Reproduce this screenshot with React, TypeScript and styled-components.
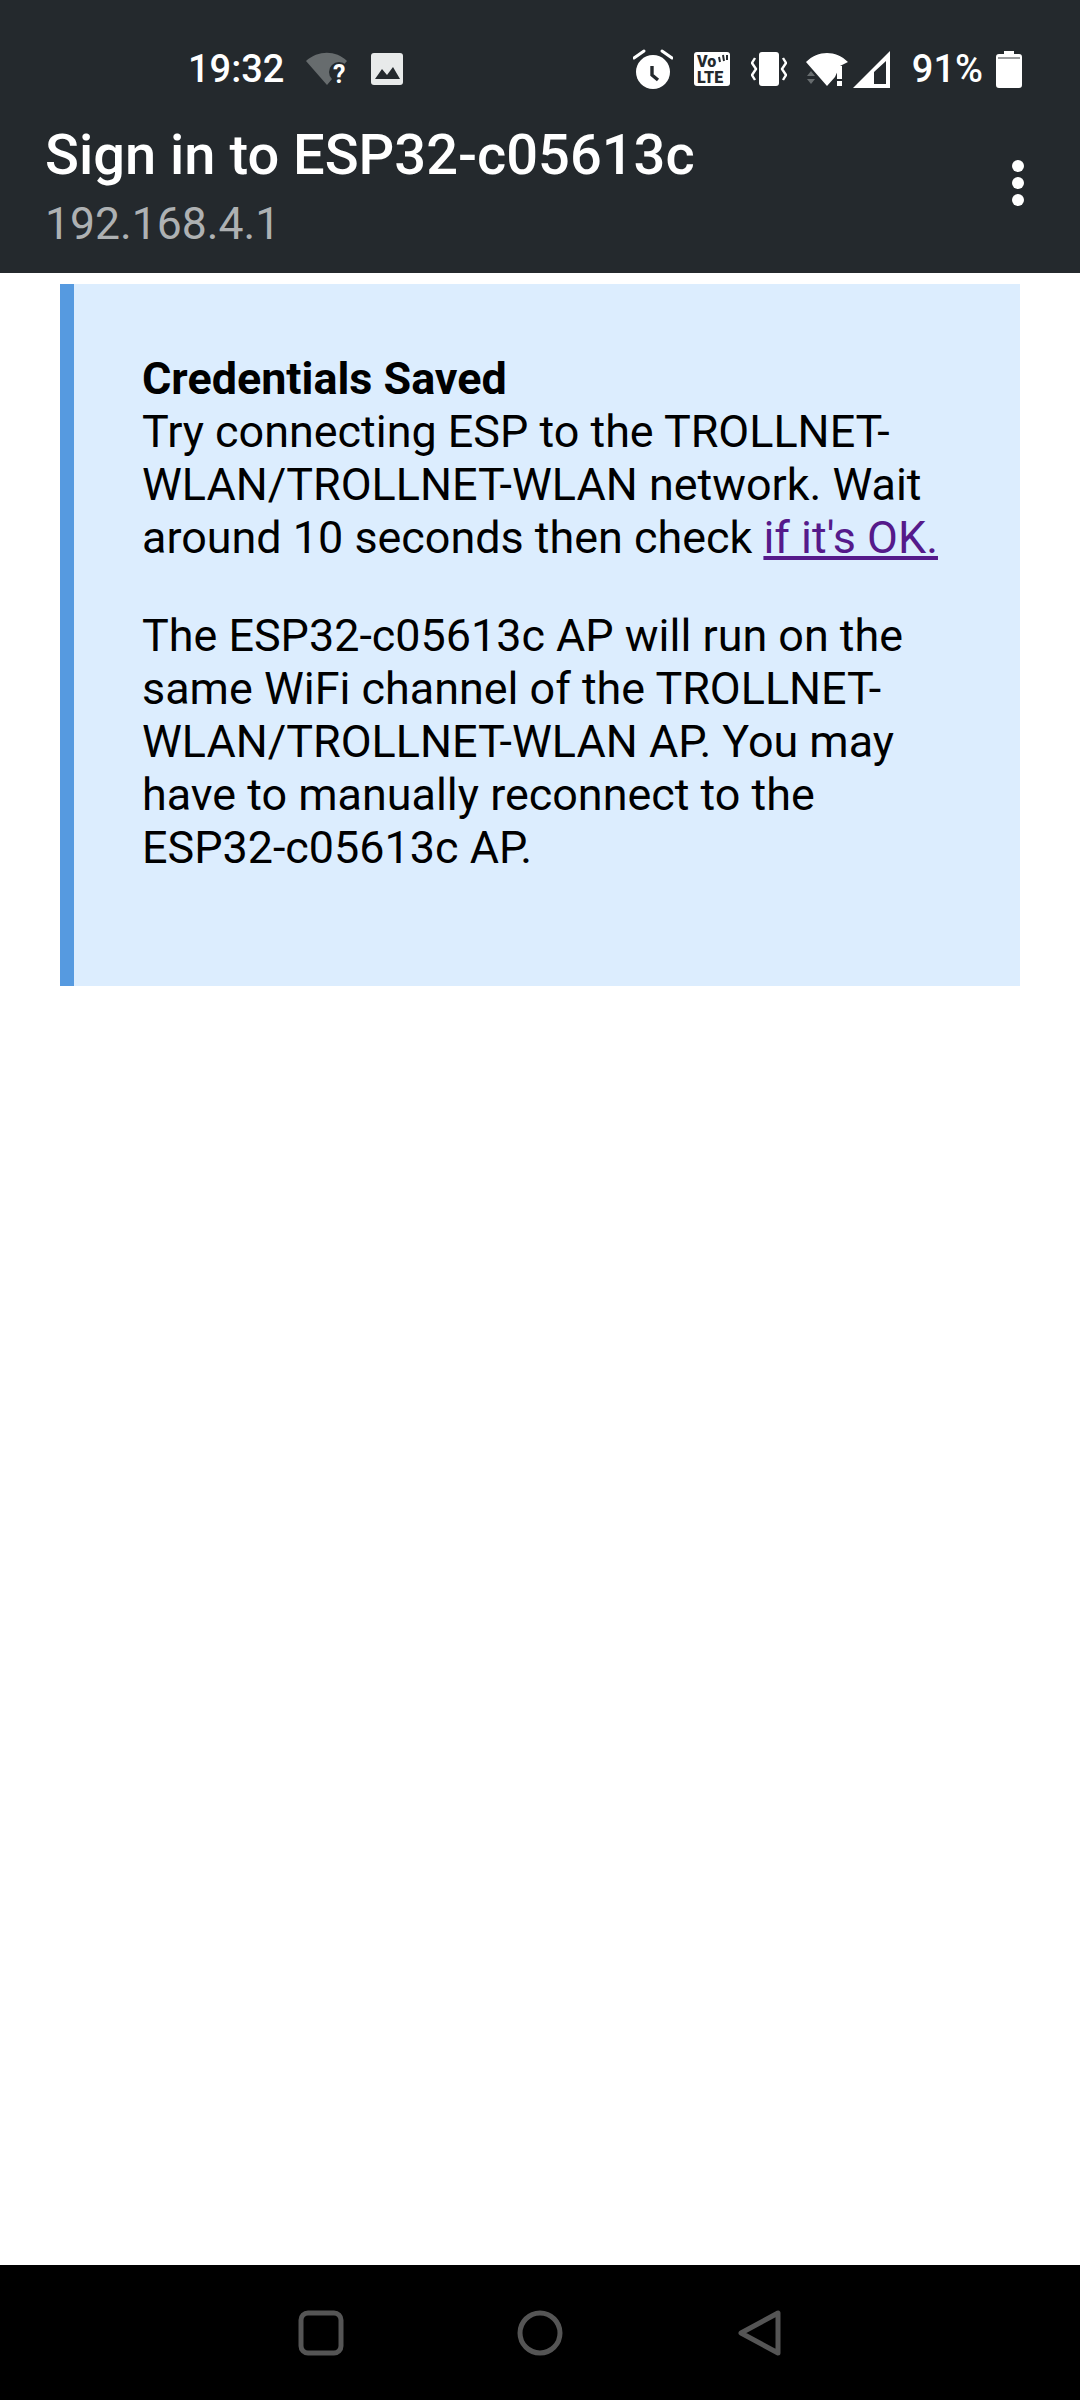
import styled, { createGlobalStyle } from 'styled-components';

const GlobalStyle = createGlobalStyle`
  html, body {
    margin: 0;
    padding: 0;
    background: #fff;
    font-family: Roboto, "Liberation Sans", sans-serif;
  }
`;

const Screen = styled.div`
  width: 1080px;
  height: 2400px;
  display: flex;
  flex-direction: column;
  overflow: hidden;
`;

const Header = styled.header`
  height: 273px;
  flex: none;
  background: #24292d;
  color: #fff;
  display: flex;
  flex-direction: column;
`;

const StatusBar = styled.div`
  height: 38px;
  padding: 50px 58px 0 188px;
  display: flex;
  align-items: center;
  justify-content: space-between;
`;

const StatusGroup = styled.div`
  display: flex;
  align-items: center;
`;

const StatusSlot = styled.span<{ $left: number }>`
  display: flex;
  align-items: center;
  margin-left: ${props => props.$left}px;
`;

const StatusText = styled.span`
  font-size: 38px;
  font-weight: 500;
  line-height: 40px;
  color: #fff;
  white-space: nowrap;
`;

const TitleRow = styled.div`
  flex: 1;
  display: flex;
  align-items: flex-start;
  justify-content: space-between;
  padding: 36px 56px 0 45px;
`;

const TitleBlock = styled.div`
  display: flex;
  flex-direction: column;
`;

const Title = styled.h1`
  margin: 0;
  font-size: 56px;
  line-height: 62px;
  font-weight: 500;
  color: #fff;
  white-space: nowrap;
`;

const Subtitle = styled.div`
  font-size: 44.5px;
  line-height: 50px;
  margin-top: 13px;
  color: #aeb1b3;
`;

const MenuDots = styled.div`
  display: flex;
  flex-direction: column;
  gap: 5px;
  margin-top: 36px;
`;

const Dot = styled.span`
  width: 12px;
  height: 12px;
  border-radius: 50%;
  background: #fff;
`;

const Content = styled.main`
  flex: 1;
  background: #fff;
  padding: 11px 60px 0;
`;

const Notice = styled.section`
  background: #dcedfe;
  border-left: 14px solid #569ae0;
  padding: 68px 70px 0 68px;
  height: 702px;
  box-sizing: border-box;
  color: #000;
  font-size: 44.9px;
  line-height: 53px;
`;

const NoticeTitle = styled.strong`
  display: block;
  font-weight: 700;
`;

const Paragraph = styled.p`
  margin: 0 0 45px;
`;

const NoticeLink = styled.a`
  color: #551a8b;
  text-decoration: underline;
`;

const NavBar = styled.nav`
  height: 135px;
  flex: none;
  background: #000;
  display: flex;
  justify-content: center;
  align-items: center;
`;

const NavCell = styled.div`
  width: 219px;
  display: flex;
  justify-content: center;
`;

export default function App() {
  return (
    <Screen>
      <GlobalStyle />
      <Header>
        <StatusBar>
          <StatusGroup>
            <StatusText>19:32</StatusText>
            <StatusSlot $left={22}>
              <svg width="42" height="36" viewBox="0 0 42 36">
                <path d="M21 34 L0 10 C12 -1 30 -1 41 10 L33 19 L26 28 Z" fill="#676c6e" />
                <circle cx="33" cy="21" r="10" fill="#24292d" />
                <text x="27" y="32" fontSize="25" fontWeight="700" fontFamily="Roboto, sans-serif" fill="#fff">?</text>
              </svg>
            </StatusSlot>
            <StatusSlot $left={23}>
              <svg width="32" height="32" viewBox="0 0 32 32">
                <rect width="32" height="32" rx="3" fill="#e8eaea" />
                <path d="M4 26 L11 16 L16 22 L22 14 L29 26 Z" fill="#24292d" />
              </svg>
            </StatusSlot>
          </StatusGroup>
          <StatusGroup>
            <svg width="40" height="40" viewBox="0 0 40 40">
              <circle cx="20" cy="23" r="17" fill="#fff" />
              <path d="M19 17 V26 L25 31" fill="none" stroke="#24292d" strokeWidth="3.4" />
              <path d="M1 9 L11 2 M39 9 L29 2" stroke="#fff" strokeWidth="3" strokeLinecap="round" />
            </svg>
            <StatusSlot $left={21}>
              <svg width="36" height="34" viewBox="0 0 36 34">
                <rect width="36" height="34" rx="3" fill="#fff" />
                <text x="3" y="15" fontSize="16" fontWeight="900" fontFamily="Roboto, sans-serif" fill="#24292d">Vo</text>
                <text x="3" y="31" fontSize="16" fontWeight="900" fontFamily="Roboto, sans-serif" fill="#24292d">LTE</text>
                <path d="M25 5 L26 10 M29 3 L30 9 M33 3 L33 8" stroke="#24292d" strokeWidth="2" />
              </svg>
            </StatusSlot>
            <StatusSlot $left={21}>
              <svg width="36" height="34" viewBox="0 0 36 34">
                <rect x="8" y="0" width="20" height="34" rx="3" fill="#fff" />
                <path d="M4 6 L1 11 L5 17 L1 23 L4 28 M32 6 L35 11 L31 17 L35 23 L32 28" fill="none" stroke="#fff" strokeWidth="2.4" strokeLinejoin="round" />
              </svg>
            </StatusSlot>
            <StatusSlot $left={19}>
              <svg width="43" height="36" viewBox="0 0 43 36">
                <path d="M21 35 L0 11 C12 -1 30 -1 42 11 L34 15 L29 26 Z" fill="#fff" />
                <path d="M1 25 L5 20 L9 25 Z M1 28 L9 28 L5 33 Z" fill="#676c6e" />
                <rect x="31" y="15" width="5" height="13" fill="#fff" />
                <rect x="31" y="30" width="5" height="5" fill="#fff" />
              </svg>
            </StatusSlot>
            <StatusSlot $left={4}>
              <svg width="37" height="37" viewBox="0 0 37 37">
                <path fillRule="evenodd" d="M37 0 V37 H0 Z M33 10 L21 21 V33 H33 Z" fill="#fff" />
              </svg>
            </StatusSlot>
            <StatusSlot $left={22}>
              <StatusText>91%</StatusText>
            </StatusSlot>
            <StatusSlot $left={13}>
              <svg width="26" height="37" viewBox="0 0 26 37">
                <path d="M8 0 H18 V3 H23 Q26 3 26 6 V34 Q26 37 23 37 H3 Q0 37 0 34 V6 Q0 3 3 3 H8 Z" fill="#fff" />
                <rect x="2" y="6" width="22" height="2" fill="#9a9c9e" />
              </svg>
            </StatusSlot>
          </StatusGroup>
        </StatusBar>
        <TitleRow>
          <TitleBlock>
            <Title>Sign in to ESP32-c05613c</Title>
            <Subtitle>192.168.4.1</Subtitle>
          </TitleBlock>
          <MenuDots>
            <Dot />
            <Dot />
            <Dot />
          </MenuDots>
        </TitleRow>
      </Header>
      <Content>
        <Notice>
          <Paragraph>
            <NoticeTitle>Credentials Saved</NoticeTitle>
            Try connecting ESP to the TROLLNET-WLAN/TROLLNET-WLAN network. Wait around 10 seconds then check{' '}
            <NoticeLink href="#">if it's OK.</NoticeLink>
          </Paragraph>
          <Paragraph>
            The ESP32-c05613c AP will run on the same WiFi channel of the TROLLNET-WLAN/TROLLNET-WLAN AP. You may have to manually reconnect to the ESP32-c05613c AP.
          </Paragraph>
        </Notice>
      </Content>
      <NavBar>
        <NavCell>
          <svg width="46" height="46" viewBox="0 0 46 46">
            <rect x="3" y="3" width="40" height="40" rx="7" fill="none" stroke="#555" strokeWidth="5" />
          </svg>
        </NavCell>
        <NavCell>
          <svg width="46" height="46" viewBox="0 0 46 46">
            <circle cx="23" cy="23" r="20" fill="none" stroke="#555" strokeWidth="5" />
          </svg>
        </NavCell>
        <NavCell>
          <svg width="48" height="48" viewBox="0 0 48 48">
            <path d="M43 4 V44 L6 24 Z" fill="none" stroke="#555" strokeWidth="5" strokeLinejoin="round" />
          </svg>
        </NavCell>
      </NavBar>
    </Screen>
  );
}
